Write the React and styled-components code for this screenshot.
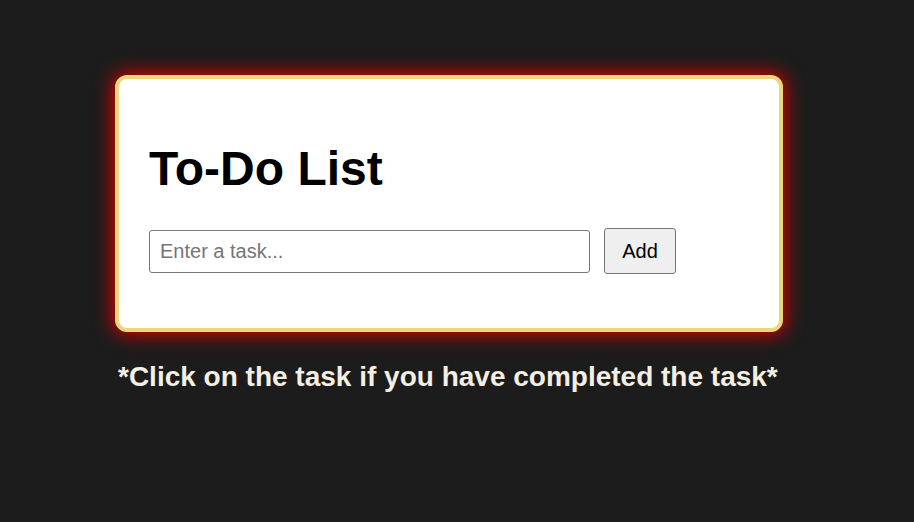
import React from "react";
import styled, { createGlobalStyle } from "styled-components";

const GlobalStyle = createGlobalStyle`
  body {
    margin: 0;
    background: #1c1c1c;
    font-family: "Liberation Sans", Arial, sans-serif;
  }
`;

const Page = styled.div`
  padding: 75px 0 0 115px;
`;

const Card = styled.div`
  box-sizing: border-box;
  width: 668px;
  height: 257px;
  padding: 30px 30px;
  background: #fff;
  border: 4px solid #ead67c;
  border-radius: 12px;
  box-shadow: 0 0 18px 3px #d40000;
`;

const Title = styled.h1`
  margin: 32px 0 32px;
  font-size: 48px;
  line-height: 1.15;
  color: #000;
`;

const Row = styled.form`
  display: flex;
  align-items: center;
  gap: 14px;
`;

const TaskInput = styled.input`
  box-sizing: border-box;
  width: 441px;
  height: 43px;
  padding: 0 10px;
  font-family: inherit;
  font-size: 20px;
  border: 1px solid #767676;
  border-radius: 3px;

  &::placeholder {
    color: #757575;
  }
`;

const AddButton = styled.button`
  box-sizing: border-box;
  width: 72px;
  height: 46px;
  font-family: inherit;
  font-size: 20px;
  color: #000;
  background: #efefef;
  border: 1px solid #767676;
  border-radius: 3px;
`;

const Hint = styled.p`
  margin: 29px 0 0 3px;
  font-size: 28px;
  line-height: 1.15;
  font-weight: bold;
  color: #f3efe3;
`;

function App() {
  return (
    <>
      <GlobalStyle />
      <Page>
        <Card>
          <Title>To-Do List</Title>
          <Row onSubmit={(e) => e.preventDefault()}>
            <TaskInput placeholder="Enter a task..." />
            <AddButton type="submit">Add</AddButton>
          </Row>
        </Card>
        <Hint>*Click on the task if you have completed the task*</Hint>
      </Page>
    </>
  );
}

export default App;
